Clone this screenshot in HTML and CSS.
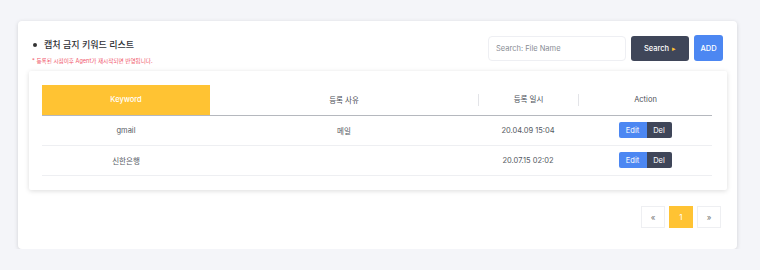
FILE: index.html
```html
<!DOCTYPE html>
<html lang="ko">
<head>
    <meta charset="UTF-8">
    <meta name="viewport" content="width=device-width, initial-scale=1.0">
    <title>캡처 금지 키워드 리스트</title>
    <link rel="stylesheet" href="styles.css">
</head>
<body>
    <div class="card">
        <div class="card-header">
            <div class="title-block">
                <h1 class="title"><span class="bullet"></span>캡처 금지 키워드 리스트</h1>
                <p class="note">* 등록된 시점이후 Agent가 재시작되면 반영됩니다.</p>
            </div>
            <div class="toolbar">
                <input type="text" class="search-input" placeholder="Search: File Name">
                <button class="btn btn-search">Search <span class="arrow">&#9656;</span></button>
                <button class="btn btn-add">ADD</button>
            </div>
        </div>

        <div class="table-card">
            <table class="keyword-table">
                <thead>
                    <tr>
                        <th class="col-keyword">Keyword</th>
                        <th class="col-reason">등록 사유</th>
                        <th class="col-date"><span class="sep">등록 일시</span></th>
                        <th class="col-action"><span class="sep">Action</span></th>
                    </tr>
                </thead>
                <tbody>
                    <tr>
                        <td>gmail</td>
                        <td>메일</td>
                        <td>20.04.09 15:04</td>
                        <td><button class="mini edit">Edit</button><button class="mini del">Del</button></td>
                    </tr>
                    <tr>
                        <td>신한은행</td>
                        <td></td>
                        <td>20.07.15 02:02</td>
                        <td><button class="mini edit">Edit</button><button class="mini del">Del</button></td>
                    </tr>
                </tbody>
            </table>
        </div>

        <div class="pagination">
            <a class="page">&laquo;</a>
            <a class="page active">1</a>
            <a class="page">&raquo;</a>
        </div>
    </div>
</body>
</html>
```

FILE: styles.css
```css
:root {
    --bg: #f4f5f9;
    --card: #ffffff;
    --yellow: #ffc333;
    --dark: #3f4659;
    --blue: #4c87f2;
    --text: #555a63;
    --red: #f0566a;
}

* {
    margin: 0;
    padding: 0;
    box-sizing: border-box;
    font-family: Inter, "Noto Sans", "Noto Sans CJK KR", sans-serif;
}

body {
    background-color: var(--bg);
    padding: 21px 0 0 18px;
}

.card {
    width: 719px;
    height: 228px;
    background-color: var(--card);
    border-radius: 4px;
    box-shadow: 0 1px 4px rgba(0, 0, 0, 0.15);
    padding: 0 10px 0 11px;
}

.card-header {
    display: flex;
    justify-content: space-between;
    align-items: flex-start;
    padding: 14px 4px 0 3px;
    height: 50px;
}

.title {
    display: flex;
    align-items: center;
    font-size: 9px;
    font-weight: 500;
    color: #2f3136;
    margin-top: 3px;
}

.bullet {
    width: 4px;
    height: 4px;
    border-radius: 50%;
    background-color: #333;
    margin: 0 7px 0 1px;
}

.note {
    font-size: 5.6px;
    color: var(--red);
    margin-top: 6px;
}

.toolbar {
    display: flex;
    align-items: flex-start;
}

.search-input {
    width: 138px;
    height: 25px;
    margin-top: 1px;
    border: 1px solid #eeeff3;
    border-radius: 4px;
    padding: 0 7px;
    font-size: 7.5px;
    color: #333;
}

.search-input::placeholder {
    color: #888c94;
}

.btn {
    border: none;
    border-radius: 3px;
    color: #fff;
    font-size: 7.5px;
    font-weight: 500;
    cursor: pointer;
}

.btn-search {
    width: 58px;
    height: 25px;
    margin: 1px 0 0 5px;
    background-color: var(--dark);
}

.arrow {
    color: var(--yellow);
    font-size: 7px;
    margin-left: 1px;
}

.btn-add {
    width: 29px;
    height: 26px;
    margin-left: 5px;
    background-color: var(--blue);
}

.table-card {
    height: 119px;
    background-color: var(--card);
    border-radius: 2px;
    box-shadow: 0 1px 5px rgba(0, 0, 0, 0.14);
    padding: 14px 15px 0 13px;
}

.keyword-table {
    width: 670px;
    border-collapse: collapse;
    font-size: 7.5px;
    color: var(--text);
}

.keyword-table th {
    height: 30px;
    font-weight: 400;
    color: #4a4e56;
    border-bottom: 1px solid #b5b8be;
    text-align: center;
}

.keyword-table th.col-keyword {
    width: 168px;
    background-color: var(--yellow);
    color: #fff;
    font-weight: 500;
}

.col-reason { width: 268px; }
.col-date { width: 100px; }
.col-action { width: 134px; }

.keyword-table th .sep {
    display: block;
    border-left: 1px solid #e3e4e8;
    line-height: 12px;
}

.keyword-table td {
    height: 30px;
    text-align: center;
    border-bottom: 1px solid #eeeff2;
}

.mini {
    border: none;
    height: 16px;
    color: #fff;
    font-size: 7.5px;
    cursor: pointer;
    vertical-align: middle;
}

.mini.edit {
    width: 28px;
    background-color: var(--blue);
    border-radius: 2px 0 0 2px;
}

.mini.del {
    width: 25px;
    background-color: var(--dark);
    border-radius: 0 2px 2px 0;
}

.pagination {
    display: flex;
    justify-content: flex-end;
    gap: 4px;
    padding: 16px 6px 0 0;
}

.page {
    width: 24px;
    height: 22px;
    display: flex;
    align-items: center;
    justify-content: center;
    border: 1px solid #eeeff2;
    font-size: 8px;
    color: #777;
}

.page.active {
    background-color: var(--yellow);
    border-color: var(--yellow);
    color: #fff;
}
```
